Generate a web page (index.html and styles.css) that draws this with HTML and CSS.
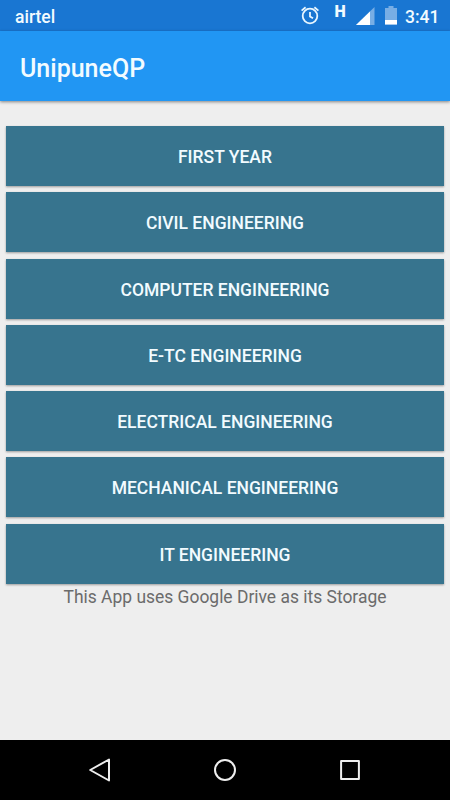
FILE: index.html
```html
<!DOCTYPE html>
<html lang="en">

<head>
    <meta charset="UTF-8">
    <title>UnipuneQP</title>
    <link rel="stylesheet" href="styles.css">
</head>

<body>
    <div class="status-bar">
        <span class="carrier">airtel</span>
        <div class="status-icons">
            <svg class="alarm" width="20" height="20" viewBox="0 0 20 20">
                <circle cx="10" cy="11" r="7.3" />
                <path d="M10 6.9v4.5l3 1.9M1.6 5.6l4-3.4M18.4 5.6l-4-3.4" />
            </svg>
            <span class="network">H</span>
            <svg class="signal" width="19" height="18" viewBox="0 0 19 18">
                <path class="dim" d="M18.5 0v18H0z" />
                <path d="M14 4.4V18H0z" />
            </svg>
            <svg class="battery" width="12" height="19" viewBox="0 0 12 19">
                <path class="dim" d="M3.5 0h5v2H12v12H0V2h3.5z" />
                <path d="M0 14h12v4.6H0z" />
            </svg>
            <span class="clock">3:41</span>
        </div>
    </div>
    <header class="app-bar">
        <h1>UnipuneQP</h1>
    </header>
    <main>
        <div class="branches">
            <button>FIRST YEAR</button>
            <button>CIVIL ENGINEERING</button>
            <button>COMPUTER ENGINEERING</button>
            <button>E-TC ENGINEERING</button>
            <button>ELECTRICAL ENGINEERING</button>
            <button>MECHANICAL ENGINEERING</button>
            <button>IT ENGINEERING</button>
        </div>
        <p>This App uses Google Drive as its Storage</p>
    </main>
    <nav class="nav-bar">
        <svg width="26" height="26" viewBox="0 0 26 26">
            <path d="M22 2.5v21L3.2 13z" />
        </svg>
        <svg width="26" height="26" viewBox="0 0 26 26">
            <circle cx="13" cy="13" r="10" />
        </svg>
        <svg width="26" height="26" viewBox="0 0 26 26">
            <path d="M4.1 4.1h17.8v17.8H4.1z" />
        </svg>
    </nav>
</body>

</html>
```

FILE: styles.css
```css
* {
    margin: 0;
    padding: 0;
    box-sizing: border-box;
}

body {
    display: flex;
    flex-direction: column;
    height: 800px;
    background-color: #eeeeee;
    font-family: Roboto, sans-serif;
    overflow: hidden;
}

.status-bar {
    display: flex;
    justify-content: space-between;
    height: 31px;
    padding: 0 10.5px 0 15px;
    background-color: #1976d2;
    color: #f2fbff;
    font-size: 17.5px;
    font-weight: 500;
    line-height: 34px;
}

.status-icons {
    display: flex;
}

.status-icons svg {
    fill: white;
}

.status-icons .alarm {
    margin: 5px 15px 0 0;
    fill: none;
    stroke: #e8f6ff;
    stroke-width: 1.8;
}

.network {
    width: 11px;
    margin-right: 10px;
    font-size: 16px;
    font-weight: 900;
    line-height: 23px;
}

.signal {
    margin: 7px 10px 0 0;
}

.battery {
    margin: 6px 8.5px 0 0;
}

.status-icons .dim {
    fill: #78aee5;
}

.app-bar {
    height: 70px;
    padding-left: 20px;
    background-color: #2196f3;
    box-shadow: 0 1px 3px rgba(0, 0, 0, 0.45);
}

h1 {
    color: #f2fbff;
    font-size: 25px;
    font-weight: 500;
    line-height: 75px;
}

main {
    flex: 1;
    padding: 25px 6px 0;
}

.branches {
    display: flex;
    flex-direction: column;
    gap: 6.3px;
}

button {
    height: 60px;
    border: none;
    background-color: #37748e;
    box-shadow: 0 1px 2px rgba(0, 0, 0, 0.35);
    color: #f2fbff;
    font-family: inherit;
    font-size: 17.5px;
    font-weight: 500;
    line-height: 63px;
}

p {
    color: #6b6b6b;
    font-size: 17.45px;
    line-height: 26px;
    text-align: center;
}

.nav-bar {
    display: flex;
    justify-content: space-between;
    align-items: center;
    height: 60px;
    padding: 0 87px;
    background-color: #000;
}

.nav-bar svg {
    fill: none;
    stroke: #eee;
    stroke-width: 2;
    stroke-linejoin: round;
}
```
